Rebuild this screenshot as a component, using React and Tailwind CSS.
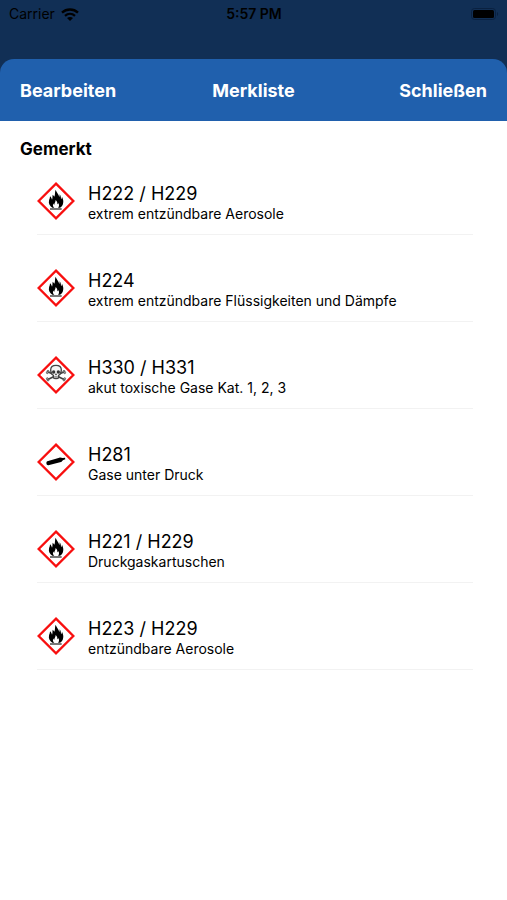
import React from "react";

const entries = [
    { id: 1, code: "H222 / H229", text: "extrem entzündbare Aerosole", symbol: "flame" },
    { id: 2, code: "H224", text: "extrem entzündbare Flüssigkeiten und Dämpfe", symbol: "flame" },
    { id: 3, code: "H330 / H331", text: "akut toxische Gase Kat. 1, 2, 3", symbol: "skull" },
    { id: 4, code: "H281", text: "Gase unter Druck", symbol: "cylinder" },
    { id: 5, code: "H221 / H229", text: "Druckgaskartuschen", symbol: "flame" },
    { id: 6, code: "H223 / H229", text: "entzündbare Aerosole", symbol: "flame" },
];

function Flame() {
    return (
        <>
            <path
                d="M46 77C38 71 34 64 36 56C37 52 39 49 39 43C43 46 44 50 45 53C47 49 46 44 47 38C49 40 51 42 52 44C55 38 53 30 56 23C58 31 65 35 67 45C68 43 68 41 68 37C72 42 72 49 72 52C74 50 75 47 75 44C79 52 80 58 78 65C77 70 74 74 69 77Z"
                fill="#000"
            />
            <path
                d="M52 78C47 74 47 69 49 64C49 66 50 68 52 68C52 63 56 60 56 54C60 58 62 62 61 67C63 66 64 65 64 63C67 67 67 74 63 78Z"
                fill="#fff"
            />
            <path d="M39 81H74" stroke="#333" strokeWidth="4" />
        </>
    );
}

function Skull() {
    return (
        <>
            <g stroke="#444" strokeWidth="5" strokeLinecap="round">
                <path d="M34 48L80 70M80 48L34 70" />
            </g>
            <g fill="#aaa" stroke="#444" strokeWidth="2">
                <circle cx="33" cy="46" r="3" />
                <circle cx="31" cy="50" r="3" />
                <circle cx="81" cy="46" r="3" />
                <circle cx="83" cy="50" r="3" />
                <circle cx="33" cy="72" r="3" />
                <circle cx="31" cy="68" r="3" />
                <circle cx="81" cy="72" r="3" />
                <circle cx="83" cy="68" r="3" />
            </g>
            <path
                d="M57 28C47 28 41 34 41 42C41 47 42 49 44 52C44 56 46 57 49 58V65C51 69 63 69 65 65V58C68 57 70 56 70 52C72 49 73 47 73 42C73 34 67 28 57 28Z"
                fill="#f4f4f4"
                stroke="#444"
                strokeWidth="4"
            />
            <ellipse cx="50" cy="48" rx="5" ry="5" fill="#333" />
            <ellipse cx="64" cy="48" rx="5" ry="5" fill="#333" />
            <path d="M57 51L60 57H54Z" fill="#333" />
            <path d="M50 62H64M54 59V66M57 59V66M60 59V66" stroke="#444" strokeWidth="1" />
        </>
    );
}

function Cylinder() {
    return (
        <path
            d="M31 55L67 44C71 43 74 45 77 45L84 44L85 49L79 51C76 53 75 56 72 57L34 67C28 68 26 57 31 55Z"
            fill="#000"
        />
    );
}

const symbols = { flame: Flame, skull: Skull, cylinder: Cylinder };

function Pictogram({ symbol }) {
    const Symbol = symbols[symbol];

    return (
        <svg viewBox="0 0 114 114" className="size-[38px] shrink-0" aria-hidden="true">
            <path d="M57 5L109 57L57 109L5 57Z" fill="#fff" stroke="#f80f0f" strokeWidth="7" />
            <Symbol />
        </svg>
    );
}

function StatusBar() {
    return (
        <div className="grid h-7 grid-cols-3 items-center pr-2 pl-[9px] text-sm text-black">
            <div className="flex items-center gap-1.5">
                <span>Carrier</span>
                <svg viewBox="0 0 18 13" className="h-[13px] w-[18px]" fill="none" stroke="currentColor" aria-hidden="true">
                    <path d="M1 4.6C5.5 0.5 12.5 0.5 17 4.6" strokeWidth="2.4" />
                    <path d="M4 7.8C7 5.2 11 5.2 14 7.8" strokeWidth="2.3" />
                    <path d="M9 13L6 10C7.7 8.5 10.3 8.5 12 10Z" fill="currentColor" stroke="none" />
                </svg>
            </div>
            <span className="text-center font-semibold">5:57 PM</span>
            <svg viewBox="0 0 28 12" className="h-3 w-7 justify-self-end" aria-hidden="true">
                <rect x="0.5" y="0.5" width="24" height="11" rx="3" fill="none" stroke="#0a2140" />
                <rect x="2" y="2" width="21" height="8" rx="1.5" fill="#000" />
                <path d="M26 4C27.5 4.5 27.5 7.5 26 8Z" fill="#0a2140" />
            </svg>
        </div>
    );
}

export default function App() {
    return (
        <div className="flex min-h-screen flex-col bg-[#112f55] font-['Inter',sans-serif] text-black">
            <StatusBar />

            <header className="mt-[31px] grid h-[62px] grid-cols-3 items-center rounded-t-[14px] bg-[#2060ad] px-5 pt-0.5 text-lg font-bold text-white">
                <button type="button" className="justify-self-start">Bearbeiten</button>
                <h1 className="text-center">Merkliste</h1>
                <button type="button" className="justify-self-end">Schließen</button>
            </header>

            <main className="flex-1 bg-white">
                <h2 className="px-5 pt-4 text-[17px] leading-6 font-bold">Gemerkt</h2>

                <ul className="mt-px flex flex-col gap-3.5 pr-[34px] pl-[37px]">
                    {entries.map((entry) => (
                        <li key={entry.id} className="flex gap-[13px] border-b border-[#f2f2f2] pt-5 pb-2.5">
                            <Pictogram symbol={entry.symbol} />
                            <div className="pt-0.5">
                                <h3 className="text-lg leading-5">{entry.code}</h3>
                                <p className="text-sm leading-5">{entry.text}</p>
                            </div>
                        </li>
                    ))}
                </ul>
            </main>
        </div>
    );
}
